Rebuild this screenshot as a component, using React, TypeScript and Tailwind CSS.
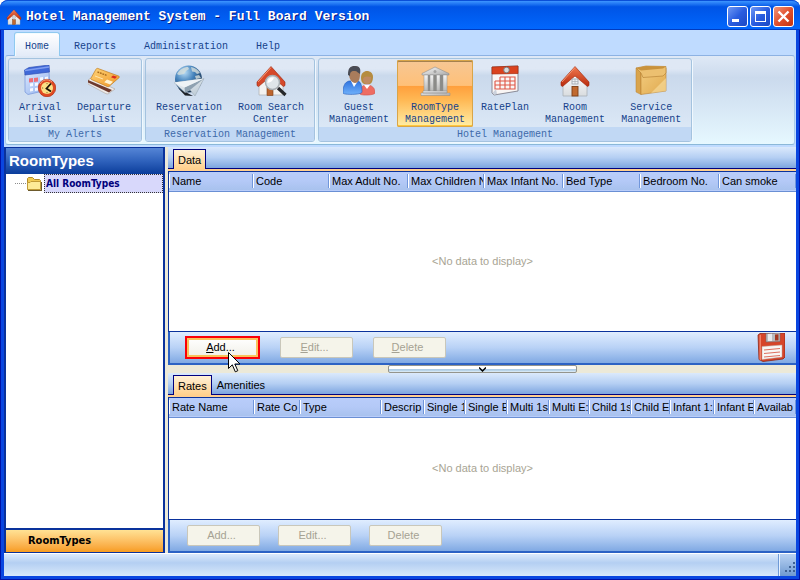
import { ReactNode, useState } from 'react';

const HouseIcon = ({ size = 32 }: { size?: number }) => (
  <svg width={size} height={size} viewBox="0 0 32 32" aria-hidden="true">
    <defs>
      <linearGradient id="roof" x1="0" y1="0" x2="0" y2="1">
        <stop offset="0" stopColor="#f07a50" />
        <stop offset="1" stopColor="#b92a0c" />
      </linearGradient>
      <linearGradient id="wall" x1="0" y1="0" x2="0" y2="1">
        <stop offset="0" stopColor="#ffffff" />
        <stop offset="1" stopColor="#d9dcdf" />
      </linearGradient>
    </defs>
    <path d="M4 18 16 7l12 11v13H4z" fill="url(#wall)" stroke="#a9b0b6" strokeWidth="0.8" />
    <path d="M16 1.500 30 17v3.500l-1.500 1L16 11 3.500 21.500 2 20.500V17z" fill="url(#roof)" stroke="#9c2206" strokeWidth="0.6" />
    <path d="M16 2.500 3 17" stroke="#f79a76" strokeWidth="0.900" />
    <rect x="13" y="14" width="6" height="5" fill="#eef2f5" stroke="#98a0a8" strokeWidth="0.8" />
    <path d="M16 14v5M13 16.5h6" stroke="#a8afb6" strokeWidth="0.7" />
    <rect x="13" y="21.500" width="6" height="9.500" fill="#c0692f" stroke="#7c3f17" strokeWidth="0.9" />
  </svg>
);

const ArrivalIcon = () => (
  <svg width="32" height="32" viewBox="0 0 32 32" aria-hidden="true">
    <defs>
      <linearGradient id="sheet" x1="0" y1="0" x2="1" y2="1">
        <stop offset="0" stopColor="#dbe7fd" />
        <stop offset="1" stopColor="#8db0ee" />
      </linearGradient>
    </defs>
    <path d="m1 9 24-2.500 1 18L4 29.500 1 27z" fill="url(#sheet)" stroke="#7d9cdc" strokeWidth="0.8" />
    <path d="M.5 5 5 2.500 25 0l.5 7L1 10z" fill="#3f68d8" stroke="#3152b6" strokeWidth="0.7" />
    <path d="M1 5.500 25 2" stroke="#7f9df0" strokeWidth="1.500" />
    <path d="m16 12.500 3-.4v3l-3 .4zM21 12l3-.4v3l-3 .4zM6 18.500l3-.4v3l-3 .4zM11 18l3-.4v3l-3 .4zM6 23.500l3-.4v3l-3 .4zM11 23l3-.4v3l-3 .4z" fill="#f4f8ff" />
    <path d="m5 13.500 4-.5v4l-4 .5zM10 13l4-.5v4l-4 .5z" fill="#ee6f78" />
    <circle cx="23" cy="23" r="8.700" fill="#e04a22" stroke="#b02e10" strokeWidth="0.7" />
    <path d="M16 19c2-4 8-6 12-2" fill="none" stroke="#f6a182" strokeWidth="1" />
    <circle cx="23" cy="23" r="6" fill="#fbe085" />
    <path d="M27 18.500 22.500 23.500l4.500 3" fill="none" stroke="#1c1408" strokeWidth="1.800" />
    <path d="M23 18v1.200M23 27v1.200M18 23h1.200" stroke="#8f6a28" strokeWidth="1" />
  </svg>
);

const CardsIcon = () => (
  <svg width="32" height="32" viewBox="0 0 32 32" aria-hidden="true">
    <defs>
      <linearGradient id="card" x1="0" y1="0" x2="1" y2="1">
        <stop offset="0" stopColor="#ffd478" />
        <stop offset="1" stopColor="#ee9627" />
      </linearGradient>
    </defs>
    <path d="m0 15 3-2 24 11-7 5-2-.3L0 19z" fill="#efebe8" stroke="#a9a29e" strokeWidth="0.600" />
    <path d="m0 15 24 10-3 2.500L0 17.500z" fill="#6e3a2d" />
    <path d="M10 3.500 30.500 11c1 .5 1.200 1 .5 1.700L21.500 21c-.8.700-1.500.8-2.500.4L3.500 14.500c-.8-.4-1-1-.4-1.600L8 4.200c.6-.8 1.200-1 2-.7z" fill="url(#card)" stroke="#c27d1e" strokeWidth="0.700" />
    <path d="m9.500 7 9.500 3.500" stroke="#a5691c" strokeWidth="1.400" strokeDasharray="1.800 0.800" />
    <path d="m7 11 8 3" stroke="#ffe7ae" strokeWidth="1" />
    <path d="m25 10.500 4 1.300-2 2-4-1.500z" fill="#dc2a1c" />
    <path d="m19 14.500 6 2.300-2.800 2.700-6-2.300z" fill="#fff3d2" />
  </svg>
);

const GlobeIcon = () => (
  <svg width="32" height="32" viewBox="0 0 32 32" aria-hidden="true">
    <defs>
      <radialGradient id="globe" cx="0.350" cy="0.250" r="0.800">
        <stop offset="0" stopColor="#b9ddf6" />
        <stop offset="0.450" stopColor="#4583bc" />
        <stop offset="1" stopColor="#142a44" />
      </radialGradient>
      <linearGradient id="plane" x1="0" y1="0" x2="1" y2="1">
        <stop offset="0" stopColor="#f6f9fb" />
        <stop offset="1" stopColor="#b3c3cf" />
      </linearGradient>
    </defs>
    <path d="M5 23 20 31l-8-.5z" fill="#1c2026" />
    <circle cx="15.500" cy="14" r="13.500" fill="url(#globe)" />
    <path d="M4 9c3-5 7-7 11-7l1 2-3 2-2 3-5 1zM18 2c4 .5 7 3 9 6l-3 1-2-2-3-.5zM22 11l4-1 2 3-5 1z" fill="#d6dfdc" opacity="0.800" />
    <path d="M1 17.500 31 13.500 22 31l-5-6-5 2.500z" fill="url(#plane)" stroke="#93a2ae" strokeWidth="0.500" />
    <path d="m31 13.500-14 11.500-5 2.500-.5-5z" fill="#8fa2b1" />
    <path d="m1 17.500 30-4-19.500 9z" fill="#eef3f6" />
  </svg>
);

const HouseSearchIcon = () => (
  <svg width="32" height="32" viewBox="0 0 32 32" aria-hidden="true">
    <path d="M4 18 16 7l12 11v12H4z" fill="#f3f2f0" stroke="#b2b5b8" strokeWidth="0.800" />
    <rect x="12" y="22" width="6" height="8.500" fill="#bd652e" stroke="#7c3f17" strokeWidth="0.600" />
    <path d="M16 1.500 30 17v3.500l-1.500 1L16 11 3.500 21.500 2 20.500V17z" fill="#d5492a" stroke="#9c2206" strokeWidth="0.600" />
    <path d="M16 2.500 3 17" stroke="#f79a76" strokeWidth="1" />
    <path d="m23 23 7.500 7" stroke="#26282b" strokeWidth="3.200" />
    <circle cx="17.500" cy="17.500" r="7" fill="#dfe6e9" stroke="#a7aeb2" strokeWidth="1.500" />
    <path d="M12.500 18c0-4 3-6 6.500-5.500-1 3-3 5-6.500 5.500z" fill="#fff" />
  </svg>
);

const PeopleIcon = () => (
  <svg width="32" height="32" viewBox="0 0 32 32" aria-hidden="true">
    <defs>
      <linearGradient id="suit" x1="0" y1="0" x2="0" y2="1">
        <stop offset="0" stopColor="#2f74e0" />
        <stop offset="1" stopColor="#6fb0fa" />
      </linearGradient>
    </defs>
    <path d="M17 29c0-6 2-9 7-9s8 3 8 8c0 2-13 3-15 1z" fill="#ee6c62" stroke="#d0504a" strokeWidth="0.600" />
    <path d="m21 20 3 4 3-4z" fill="#fff" />
    <path d="M18 13c0-5 3-7 6-7s6 2 6 6c0 3-1 6-3 7h-6c-2-1-3-3-3-6z" fill="#b58c40" />
    <path d="M20 14c1-3 4-3 8-2 0 4-1 7-4 7s-4-3-4-5z" fill="#c08a62" />
    <path d="M0 27c0-6 2-10 6-11h9c3 1 4 5 4 11 0 3-19 3-19 1z" fill="url(#suit)" stroke="#235bb8" strokeWidth="0.600" />
    <path d="m8 16 3 6 4-6z" fill="#fff" />
    <path d="M6 9c0-6 3-8 6-8s5 2 5 8-2 9-5 9-6-4-6-9z" fill="#a97c5c" />
    <path d="M5 10C5 3 7 1 12 1s6 3 5 8c-2-1-3-3-5-3-3 0-5 0-5 5z" fill="#4a4c55" />
  </svg>
);

const BankIcon = () => (
  <svg width="32" height="32" viewBox="0 0 32 32" aria-hidden="true">
    <defs>
      <linearGradient id="stone" x1="0" y1="0" x2="1" y2="1">
        <stop offset="0" stopColor="#fafafa" />
        <stop offset="1" stopColor="#a9a9a9" />
      </linearGradient>
      <linearGradient id="pillar" x1="0" y1="0" x2="0" y2="1">
        <stop offset="0" stopColor="#f4f4f4" />
        <stop offset="1" stopColor="#b4b4b2" />
      </linearGradient>
    </defs>
    <rect x="6" y="10" width="21" height="17" fill="#8b8b88" />
    <path d="M16 2 30 8.500V10H3V8.500z" fill="url(#stone)" stroke="#8d8d8d" strokeWidth="0.600" />
    <circle cx="16" cy="6.500" r="1.500" fill="#a2a2a2" />
    <path d="M5 10h4v17H5zM11 10h3.500v17H11zM17.500 10H21v17h-3.500zM24 10h4v17h-4z" fill="url(#pillar)" stroke="#909090" strokeWidth="0.500" />
    <path d="M4 26h24v2H4zM2 28h29v2.500H2z" fill="url(#stone)" stroke="#8d8d8d" strokeWidth="0.500" />
  </svg>
);

const RatePlanIcon = () => (
  <svg width="32" height="32" viewBox="0 0 32 32" aria-hidden="true">
    <path d="M3 2 29 1v25L5 30l-2-2z" fill="#f9f6f5" stroke="#80808c" strokeWidth="0.900" />
    <path d="m3 2 26-1v7.500L3 9z" fill="#da421e" stroke="#a62c10" strokeWidth="0.700" />
    <circle cx="17.500" cy="5" r="2.800" fill="#d8dadb" stroke="#737b7f" strokeWidth="0.900" />
    <path d="M11 12h15v12H6v-4M6 16h20M11 12v12M16 12v12M21 12v12M6 20h20M6 16v4" fill="none" stroke="#df5545" strokeWidth="1.100" />
    <path d="m3.500 28 3.500-4 1 5-3 .7z" fill="#ccd2dd" />
  </svg>
);

const BoxIcon = () => (
  <svg width="32" height="32" viewBox="0 0 32 32" aria-hidden="true">
    <defs>
      <linearGradient id="box" x1="0" y1="0" x2="1" y2="1">
        <stop offset="0" stopColor="#f3cd80" />
        <stop offset="1" stopColor="#e0a94e" />
      </linearGradient>
    </defs>
    <path d="m1 3 5 2v24.500L1 27z" fill="#d9a44c" stroke="#b98132" strokeWidth="0.500" />
    <path d="M6 5 31 3v23L6 29.500z" fill="url(#box)" stroke="#b98132" strokeWidth="0.600" />
    <path d="m1 3 10-2 20 .5V8l-3 3-20 1.500L6 8z" fill="#ecc070" stroke="#b07c30" strokeWidth="0.600" />
    <path d="m1 3 10-2 20 .5-3 2L6 5.500z" fill="#c9923c" />
    <path d="M31 13v13l-15 2z" fill="#f9dfa2" opacity="0.600" />
  </svg>
);

const SaveIcon = () => (
  <svg width="28" height="30" viewBox="0 0 28 30" aria-hidden="true">
    <path d="m1 2 2-1.500 25-.5v24l-2 2-20 2.500-4-2z" fill="#d6452a" stroke="#8e2616" strokeWidth="0.800" />
    <path d="m2.500 2 1.500-.2v25.700l-1.500-1z" fill="#ef8068" />
    <path d="m9 .5 14-.5v8.500L9 9z" fill="#b9bbbf" stroke="#7d6666" strokeWidth="0.600" />
    <path d="m11 1 4-.3v7.300h-4z" fill="#e8eaed" />
    <path d="m18 1.500 3.500-.2V7.500H18z" fill="#a63822" />
    <path d="m5 13.500 20-1.500v12L5 26.500z" fill="#f8f7f5" stroke="#b9a29c" strokeWidth="0.500" />
    <path d="m7 17 16-1.500M7 20.500 23 19M7 24l16-1.500" stroke="#dd7060" strokeWidth="1.100" />
  </svg>
);

const FolderIcon = () => (
  <svg width="17" height="15" viewBox="0 0 17 15" aria-hidden="true">
    <path d="M1.500 13V2.500l1-1h4l2 2h5l1 1V13z" fill="#f1cb52" stroke="#b08a2a" />
    <path d="M1.500 13.500v-7H4l1-1h9.500v8z" fill="#fdeb96" stroke="#c19c37" />
    <path d="M2 14.500h14M15.500 14V6" stroke="#6d5a2c" />
  </svg>
);

const CursorIcon = () => (
  <svg width="13" height="21" viewBox="0 0 13 21" aria-hidden="true">
    <path d="M.5.5v16l3.800-3.700 3 7 2.500-1.100-3-6.700h5.200z" fill="#fff" stroke="#000" />
  </svg>
);

type RibbonItem = { lines: string[]; icon: ReactNode };
type Group = { title: string; items: RibbonItem[] };

const groups: Group[] = [
  {
    title: 'My Alerts',
    items: [
      { lines: ['Arrival', 'List'], icon: <ArrivalIcon /> },
      { lines: ['Departure', 'List'], icon: <CardsIcon /> },
    ],
  },
  {
    title: 'Reservation Management',
    items: [
      { lines: ['Reservation', 'Center'], icon: <GlobeIcon /> },
      { lines: ['Room Search', 'Center'], icon: <HouseSearchIcon /> },
    ],
  },
  {
    title: 'Hotel Management',
    items: [
      { lines: ['Guest', 'Management'], icon: <PeopleIcon /> },
      { lines: ['RoomType', 'Management'], icon: <BankIcon /> },
      { lines: ['RatePlan'], icon: <RatePlanIcon /> },
      { lines: ['Room', 'Management'], icon: <HouseIcon /> },
      { lines: ['Service', 'Management'], icon: <BoxIcon /> },
    ],
  },
];

type Column = { label: string; width: string };

const roomColumns: Column[] = [
  { label: 'Name', width: 'w-[84px]' },
  { label: 'Code', width: 'w-[76px]' },
  { label: 'Max Adult No.', width: 'w-[79px]' },
  { label: 'Max Children N', width: 'w-[76px]' },
  { label: 'Max Infant No.', width: 'w-[79px]' },
  { label: 'Bed Type', width: 'w-[77px]' },
  { label: 'Bedroom No.', width: 'w-[79px]' },
  { label: 'Can smoke', width: 'w-auto' },
];

const rateColumns: Column[] = [
  { label: 'Rate Name', width: 'w-[85px]' },
  { label: 'Rate Co', width: 'w-[46px]' },
  { label: 'Type', width: 'w-[81px]' },
  { label: 'Descrip', width: 'w-[43px]' },
  { label: 'Single 1', width: 'w-[41px]' },
  { label: 'Single E', width: 'w-[42px]' },
  { label: 'Multi 1s', width: 'w-[42px]' },
  { label: 'Multi E:', width: 'w-[40px]' },
  { label: 'Child 1s', width: 'w-[42px]' },
  { label: 'Child E', width: 'w-[39px]' },
  { label: 'Infant 1:', width: 'w-[44px]' },
  { label: 'Infant E', width: 'w-[40px]' },
  { label: 'Availab', width: 'w-auto' },
];

const TitleBar = () => (
  <header className="flex h-[30px] items-center gap-1 rounded-t-lg border-t border-[#0a4fd8] bg-linear-to-b from-[#3d95ff] via-[#0054e6] via-20% to-[#0268fe] px-[6px] pt-[2px] shadow-[inset_0_-1px_0_#003bbf]">
    <HouseIcon size={16} />
    <h1 className="flex-1 whitespace-nowrap font-['Liberation_Mono',monospace] text-[13px] font-bold text-white [text-shadow:1px_1px_0_#0a1883]">
      Hotel Management System - Full Board Version
    </h1>
    <div className="flex gap-[2px]">
      <button type="button" aria-label="Minimize" className="size-[21px] rounded-[3px] border border-white bg-linear-to-br from-[#6f97f4] via-[#2a5de0] to-[#1c48c4]">
        <svg viewBox="0 0 19 19" className="size-full">
          <path d="M4 12h7v3H4z" fill="#fff" />
        </svg>
      </button>
      <button type="button" aria-label="Maximize" className="size-[21px] rounded-[3px] border border-white bg-linear-to-br from-[#6f97f4] via-[#2a5de0] to-[#1c48c4]">
        <svg viewBox="0 0 19 19" className="size-full">
          <path d="M4 4h11v11H4zM5 7v7h9V7z" fill="#fff" fillRule="evenodd" />
        </svg>
      </button>
      <button type="button" aria-label="Close" className="size-[21px] rounded-[3px] border border-white bg-linear-to-br from-[#f09478] via-[#e1502d] to-[#c33310]">
        <svg viewBox="0 0 19 19" className="size-full">
          <path d="m4.500 4.500 10 10m0-10-10 10" stroke="#fff" strokeWidth="2.400" />
        </svg>
      </button>
    </div>
  </header>
);

const Ribbon = () => {
  const [active, setActive] = useState('RoomType');

  return (
    <div className="bg-[#bfdbff] px-px pb-[2px] font-['Liberation_Mono',monospace] text-[10px] leading-3 text-[#15428b]">
      <nav className="flex h-[25px] items-end pl-[9px]">
        <a href="#home" className="relative -mb-px flex h-6 items-center rounded-t-[3px] border border-b-0 border-[#8fc9f0] bg-linear-to-b from-white to-[#e3ebf8] px-[10px] pt-1 shadow-[inset_1px_1px_0_#f2fbff]">
          Home
        </a>
        <a href="#reports" className="flex h-[23px] items-center px-[14px] pt-[6px]">Reports</a>
        <a href="#administration" className="flex h-[23px] items-center px-[14px] pt-[6px]">Administration</a>
        <a href="#help" className="flex h-[23px] items-center px-[14px] pt-[6px]">Help</a>
      </nav>

      <div className="flex gap-[3px] rounded-[3px] border border-t-[#8db2e3] border-x-[#a9cbea] border-b-[#8bb8d8] bg-linear-to-b from-[#dfe9f6] via-[#cbdaed] via-25% to-[#e6f8ff] p-[2px]">
        {groups.map(group => (
          <section key={group.title} className="rounded-[3px] border border-[#a4c3df] bg-linear-to-b from-[#dfe8f5] from-12% via-[#cad9ec] via-20% to-[#dfebf8] pt-px shadow-[1px_1px_0_#f0f8fe]">
            <div className="flex px-[2px]">
              {group.items.map(item => (
                <button
                  key={item.lines[0]}
                  type="button"
                  onClick={() => setActive(item.lines[0])}
                  className={
                    item.lines[0] === active
                      ? 'flex h-[67px] flex-col items-center rounded-[2px] bg-[linear-gradient(#f6c795,#ffc078_38%,#ff9f3c_39%,#ffb955_60%,#ffefa8)] px-2 pt-[5px] shadow-[inset_0_0_0_1px_#d9a548,inset_0_2px_0_#a5814e,inset_0_-2px_0_#ffc83c]'
                      : 'flex h-[67px] flex-col items-center px-2 pt-[5px]'
                  }
                >
                  {item.icon}
                  <span className="mt-[5px] text-center whitespace-nowrap">
                    {item.lines.map(line => (
                      <span key={line} className="block">{line}</span>
                    ))}
                  </span>
                </button>
              ))}
            </div>
            <h2 className="h-[14px] rounded-b-[2px] bg-[#c1d8f4] text-center leading-[15px] text-[#3e6aaa]">{group.title}</h2>
          </section>
        ))}
      </div>
    </div>
  );
};

const Sidebar = () => (
  <aside className="flex w-[161px] shrink-0 flex-col border-2 border-t border-b border-[#0a329c] bg-white">
    <h2 className="flex h-[26px] items-center bg-linear-to-b from-[#5585d6] via-[#2f62bc] to-[#0a3d9b] pl-[3px] text-[15px] font-bold text-white">
      RoomTypes
    </h2>
    <div className="flex flex-1 items-start pl-[9px]">
      <div className="flex flex-1 items-center">
        <span className="w-[11px] border-t border-dotted border-[#8c8c8c]" />
        <FolderIcon />
        <button type="button" className="ml-px h-[19px] flex-1 border border-dotted border-[#333] bg-[#d8d8fb] pl-px text-left font-['DejaVu_Sans_Condensed','DejaVu_Sans',sans-serif] text-[10px] font-bold whitespace-nowrap text-[#00007b]">
          All RoomTypes
        </button>
      </div>
    </div>
    <button type="button" className="h-6 border-t-2 border-[#0a329c] bg-linear-to-b from-[#ffe294] to-[#f79c1c] pl-[22px] text-left font-['DejaVu_Sans_Condensed','DejaVu_Sans',sans-serif] text-[11px] font-bold text-black">
      RoomTypes
    </button>
  </aside>
);

const TabStrip = ({ tabs }: { tabs: string[] }) => (
  <div className="flex h-[22px] items-end border-b border-[#00007f] bg-linear-to-b from-[#dbe9fc] via-[#b5cff3] to-[#7da5df] pl-[5px]">
    {tabs.map((tab, i) => (
      <button
        key={tab}
        type="button"
        className={
          i === 0
            ? '-mb-px h-5 border border-b-0 border-[#00007f] bg-linear-to-b from-[#fff1d6] to-[#ffd08c] px-1 pt-px'
            : 'h-5 px-[5px] pt-[3px]'
        }
      >
        {tab}
      </button>
    ))}
  </div>
);

const Grid = ({ columns }: { columns: Column[] }) => (
  <>
    <div className="h-[2px] bg-[#ffcf8f]" />
    <div className="flex flex-1 flex-col border-y border-l border-[#0a329c] bg-white">
      <table className="w-full table-fixed border-collapse">
        <thead>
          <tr className="h-[19px] border-b border-[#6a8fd4] bg-linear-to-b from-[#b9cdfa] via-[#b4c9f7] to-[#a8c2ee]">
            {columns.map(col => (
              <th key={col.label} className={`${col.width} p-0 text-left font-normal`}>
                <div className="h-[14px] overflow-hidden border-r border-l border-r-[#7096db] border-l-white pl-[2px] leading-[15px] whitespace-nowrap">
                  {col.label}
                </div>
              </th>
            ))}
          </tr>
        </thead>
      </table>
      <div className="flex flex-1 items-center justify-center text-[#a8a494]">&lt;No data to display&gt;</div>
    </div>
  </>
);

const disabledButton = 'h-[21px] w-[73px] rounded-[2px] border border-[#c9c7ba] bg-[#f5f4ea] pr-1 text-[#a5a293]';

const MainPanel = () => (
  <main className="flex min-w-0 flex-1 flex-col">
    <section className="flex flex-1 flex-col">
      <TabStrip tabs={['Data']} />
      <Grid columns={roomColumns} />
      <div className="flex h-[33px] items-center border-b-2 border-l-2 border-[#2c62c4] bg-linear-to-b from-[#e0edff] via-[#b9d2f6] to-[#80a9e3] pr-[11px] pl-[15px]">
        <div className="flex flex-1 items-center gap-5">
          <div className="relative flex">
            <button type="button" className="h-[23px] w-[75px] border-2 border-[#fb0007] bg-linear-to-b from-white to-[#f1f0e8] pr-1 shadow-[inset_0_0_0_2px_#f8c35c]">
              <u>A</u>dd...
            </button>
            <div className="pointer-events-none absolute top-4 left-[43px]">
              <CursorIcon />
            </div>
          </div>
          <button type="button" disabled className={disabledButton}>
            <u>E</u>dit...
          </button>
          <button type="button" disabled className={disabledButton}>
            <u>D</u>elete
          </button>
        </div>
        <button type="button" aria-label="Save">
          <SaveIcon />
        </button>
      </div>
    </section>

    <div className="flex h-2 justify-center bg-[#ece9d8]">
      <button type="button" aria-label="Collapse" className="flex h-2 w-[189px] items-center justify-center rounded-[2px] border border-[#94948c] bg-[linear-gradient(#fff_50%,#9fc3e0_60%,#e4f0f8)]">
        <svg width="7" height="5" viewBox="0 0 7 5">
          <path d="m0 .5 3.500 3.500L7 .5" fill="none" stroke="#000" strokeWidth="1.500" />
        </svg>
      </button>
    </div>

    <section className="flex flex-col">
      <TabStrip tabs={['Rates', 'Amenities']} />
      <div className="flex min-h-[125px] flex-col">
        <Grid columns={rateColumns} />
      </div>
      <div className="flex h-[33px] items-center gap-[18px] border-b-2 border-l-2 border-[#2c62c4] bg-linear-to-b from-[#e0edff] via-[#b9d2f6] to-[#80a9e3] pl-[17px]">
        <button type="button" disabled className={disabledButton}>Add...</button>
        <button type="button" disabled className={disabledButton}>Edit...</button>
        <button type="button" disabled className={disabledButton}>Delete</button>
      </div>
    </section>
  </main>
);

const StatusBar = () => (
  <footer className="flex h-[23px] border-t border-white bg-linear-to-b from-[#dceafc] via-[#b4cff2] via-40% to-[#d8e8fa]">
    <div className="flex-1" />
    <div className="flex w-[18px] items-end justify-end border-l border-[#6f9ad6] bg-linear-to-b from-[#b9d2f4] to-[#6f9ad0] pb-[3px] shadow-[inset_1px_0_0_#e6f1ff]">
      <svg width="12" height="12" viewBox="0 0 12 12" aria-hidden="true">
        <path d="M9 1h2v2H9zM5 5h2v2H5zM9 5h2v2H9zM1 9h2v2H1zM5 9h2v2H5zM9 9h2v2H9z" fill="#3f6294" />
      </svg>
    </div>
  </footer>
);

const App = () => (
  <div className="bg-white">
    <div className="flex min-h-screen flex-col rounded-t-lg bg-[#0a46e0] font-['Liberation_Sans',Arial,sans-serif] text-[11px] text-black">
      <TitleBar />
      <div className="flex flex-1 flex-col border-r border-b border-l border-[#0012a8] px-[3px] pb-[3px]">
        <Ribbon />
        <div className="flex flex-1 gap-[3px] bg-[#ece9d8]">
          <Sidebar />
          <MainPanel />
        </div>
        <StatusBar />
      </div>
    </div>
  </div>
);

export default App;
